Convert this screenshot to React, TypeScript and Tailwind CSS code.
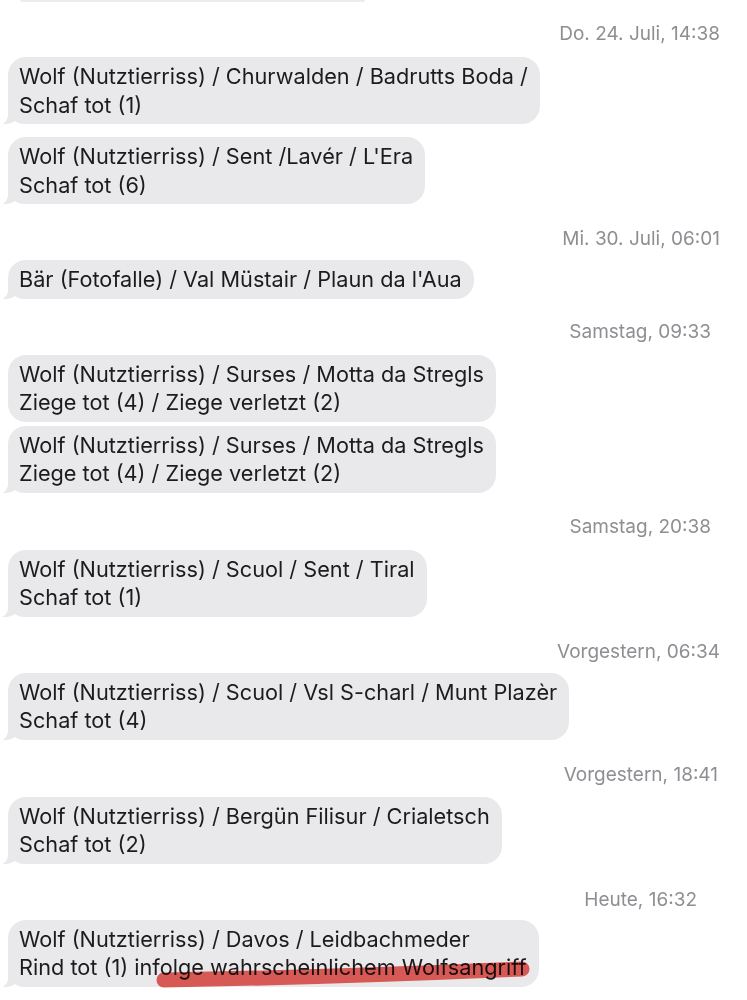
import React from "react";

type Item =
  | { kind: "time"; text: string; cls: string }
  | { kind: "msg"; lines: string[]; cls: string; tail: boolean; mark?: boolean };

const items: Item[] = [
  { kind: "time", text: "Do. 24. Juli, 14:38", cls: "mt-[21px] pr-[19px]" },
  {
    kind: "msg",
    lines: ["Wolf (Nutztierriss) / Churwalden / Badrutts Boda /", "Schaf tot (1)"],
    cls: "mt-[12px]",
    tail: true,
  },
  {
    kind: "msg",
    lines: ["Wolf (Nutztierriss) / Sent /Lavér / L'Era", "Schaf tot (6)"],
    cls: "mt-[13px]",
    tail: true,
  },
  { kind: "time", text: "Mi. 30. Juli, 06:01", cls: "mt-[24px] pr-[19px]" },
  {
    kind: "msg",
    lines: ["Bär (Fotofalle) / Val Müstair / Plaun da l'Aua"],
    cls: "mt-[10px]",
    tail: true,
  },
  { kind: "time", text: "Samstag, 09:33", cls: "mt-[22px] pr-[28px]" },
  {
    kind: "msg",
    lines: ["Wolf (Nutztierriss) / Surses / Motta da Stregls", "Ziege tot (4) / Ziege verletzt (2)"],
    cls: "mt-[12px]",
    tail: false,
  },
  {
    kind: "msg",
    lines: ["Wolf (Nutztierriss) / Surses / Motta da Stregls", "Ziege tot (4) / Ziege verletzt (2)"],
    cls: "mt-[4px]",
    tail: true,
  },
  { kind: "time", text: "Samstag, 20:38", cls: "mt-[23px] pr-[28px]" },
  {
    kind: "msg",
    lines: ["Wolf (Nutztierriss) / Scuol / Sent / Tiral", "Schaf tot (1)"],
    cls: "mt-[12px]",
    tail: true,
  },
  { kind: "time", text: "Vorgestern, 06:34", cls: "mt-[24px] pr-[19px]" },
  {
    kind: "msg",
    lines: ["Wolf (Nutztierriss) / Scuol / Vsl S-charl / Munt Plazèr", "Schaf tot (4)"],
    cls: "mt-[10px]",
    tail: true,
  },
  { kind: "time", text: "Vorgestern, 18:41", cls: "mt-[24px] pr-[21px]" },
  {
    kind: "msg",
    lines: ["Wolf (Nutztierriss) / Bergün Filisur / Crialetsch", "Schaf tot (2)"],
    cls: "mt-[11px]",
    tail: true,
  },
  { kind: "time", text: "Heute, 16:32", cls: "mt-[25px] pr-[42px]" },
  {
    kind: "msg",
    lines: ["Wolf (Nutztierriss) / Davos / Leidbachmeder", "Rind tot (1) infolge wahrscheinlichem Wolfsangriff"],
    cls: "mt-[9px]",
    tail: true,
    mark: true,
  },
];

function Tail() {
  return (
    <svg
      className="absolute bottom-0 left-[-6px] h-[20px] w-[20px]"
      viewBox="0 0 20 20"
      aria-hidden="true"
    >
      <path
        d="M6 0 V11 C6 15 4 18 0.5 20 C6 20.5 10 19 13 17 C15 18.5 18 19.5 20 20 V0 Z"
        fill="#e9e9eb"
      />
    </svg>
  );
}

function Bubble({ lines, tail, mark }: { lines: string[]; tail: boolean; mark?: boolean }) {
  return (
    <div className="relative w-fit rounded-[18px] bg-[#e9e9eb] py-[5px] pl-[11px] pr-[12px] text-[21.7px] leading-[28.5px] text-[#1c1c1e]">
      {tail ? <Tail /> : null}
      {lines.map((line, i) => (
        <div key={i} className="relative whitespace-nowrap">
          {line}
        </div>
      ))}
      {mark ? (
        <svg
          className="pointer-events-none absolute left-0 top-0 overflow-visible mix-blend-multiply"
          width="540"
          height="70"
          aria-hidden="true"
        >
          <path
            d="M156 60 Q330 57 514 49"
            stroke="#e8453f"
            strokeOpacity="0.85"
            strokeWidth="15"
            strokeLinecap="round"
            fill="none"
          />
        </svg>
      ) : null}
    </div>
  );
}

export default function App() {
  return (
    <div className="min-h-screen w-[747px] overflow-hidden bg-white font-['Inter','Liberation_Sans',sans-serif]">
      <div className="ml-[20px] h-[2px] w-[345px] rounded-b-full bg-[#ececee]" />
      <div className="flex flex-col px-[8px]">
        {items.map((item, i) =>
          item.kind === "time" ? (
            <div
              key={i}
              className={`text-right text-[19px] leading-[22px] text-[#8e8e93] ${item.cls}`}
            >
              {item.text}
            </div>
          ) : (
            <div key={i} className={item.cls}>
              <Bubble lines={item.lines} tail={item.tail} mark={item.mark} />
            </div>
          )
        )}
      </div>
    </div>
  );
}
